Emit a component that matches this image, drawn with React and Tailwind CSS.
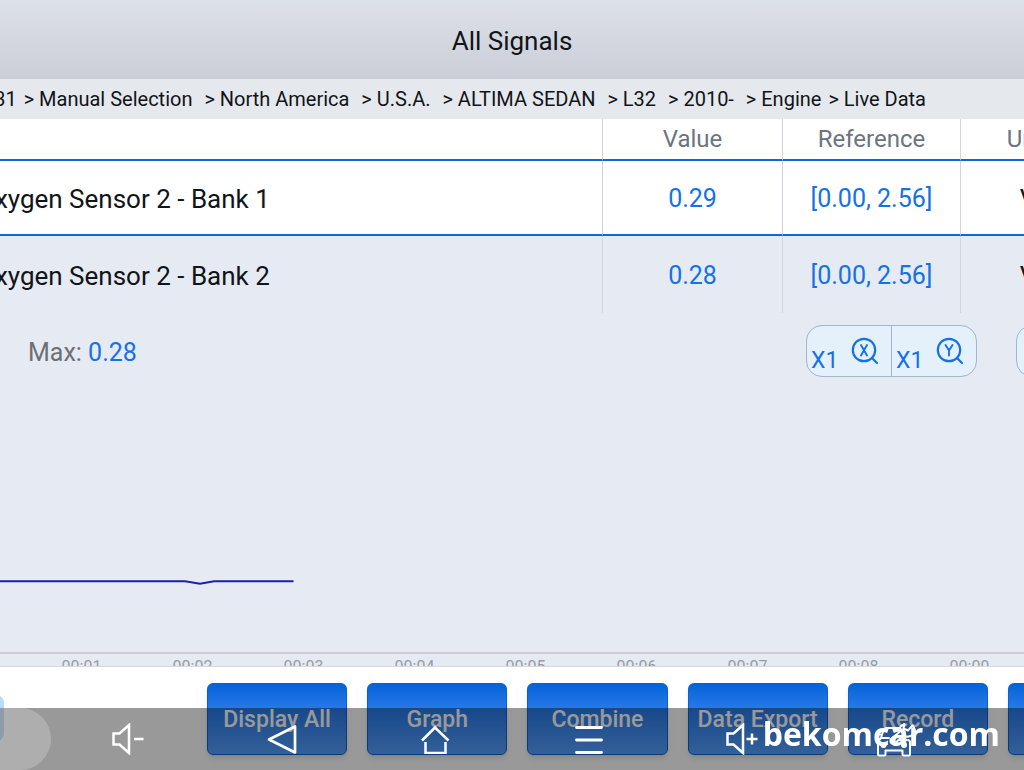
import React from 'react';
import clsx from 'clsx';

const crumbs = ['31', 'Manual Selection ', 'North America ', 'U.S.A. ', 'ALTIMA SEDAN ', 'L32 ', '2010- ', 'Engine', 'Live Data'];

const signals = [
  { name: 'Oxygen Sensor 2 - Bank 1', value: '0.29', reference: '[0.00, 2.56]', unit: 'V' },
  { name: 'Oxygen Sensor 2 - Bank 2', value: '0.28', reference: '[0.00, 2.56]', unit: 'V' },
];

const ticks = ['00:01', '00:02', '00:03', '00:04', '00:05', '00:06', '00:07', '00:08', '00:09'];

const actions = ['Display All', 'Graph', 'Combine', 'Data Export', 'Record', 'Pause'];

// Magnifier with the axis letter inside
function ZoomIcon({ axis }) {
  return (
    <svg className="w-7 h-7" viewBox="0 0 28 28" fill="none" stroke="currentColor" strokeWidth="2.2" strokeLinecap="round">
      <circle cx="13" cy="13" r="11.2" />
      <path d="M21 21l5 5" />
      {axis === 'X' ? <path strokeWidth="1.9" d="M10 8l6 10.500M16 8l-6 10.500" /> : <path strokeWidth="1.9" d="M9.500 8l3.500 5.500L16.500 8M13 13.500v5" />}
    </svg>
  );
}

function ZoomButton({ axis, className }) {
  return (
    <button type="button" aria-label={`Zoom ${axis}`} className={clsx('flex justify-between pl-1 pr-3 text-[#1471e6]', className)}>
      <span className="self-end text-[23px] leading-[30px]">X1</span>
      <span className="pt-[11px]">
        <ZoomIcon axis={axis} />
      </span>
    </button>
  );
}

function Speaker({ plus }) {
  return (
    <svg width="34" height="32" viewBox="0 0 34 32" fill="none" stroke="currentColor" strokeWidth="2.500">
      <path d="M2.500 10.500v11h6L18 30V2l-9.500 8.500z" />
      <path d={plus ? 'M21.500 16h11M27 10.500v11' : 'M23 16h9.500'} />
    </svg>
  );
}

function Back() {
  return (
    <svg width="30" height="30" viewBox="0 0 30 30" fill="none" stroke="currentColor" strokeWidth="2.700" strokeLinejoin="round">
      <path d="M2 15.500L28 2.500v26z" />
    </svg>
  );
}

function Home() {
  return (
    <svg width="30" height="30" viewBox="0 0 30 30" fill="none" stroke="currentColor" strokeWidth="2.500">
      <path d="M2 16.500L15 3.500l13.500 13M5.500 18v11h20V18" />
    </svg>
  );
}

function Menu() {
  return (
    <svg width="30" height="30" viewBox="0 0 30 30" fill="none" stroke="currentColor" strokeWidth="2.800" strokeLinecap="round">
      <path d="M2.500 3.500h25M2.500 16h25M2.500 28.500h25" />
    </svg>
  );
}

// Car with a wrench leaning over its roof
function CarService() {
  return (
    <svg width="44" height="36" viewBox="0 0 44 36" fill="none" stroke="currentColor" strokeWidth="2" strokeLinejoin="round" strokeLinecap="round">
      <path d="M25 7H12q-2 0-2.500 2L7 17l-3 3.500V33q0 1.500 1.500 1.500H10q1.500 0 1.500-1.500v-3.500h17V33q0 1.500 1.500 1.500h4.500Q36 34.500 36 33V20.500l-1.500-1.500" />
      <path d="M7 17h8M3.500 13.500H7M25 19h8" />
      <circle cx="9.500" cy="24" r="2" />
      <circle cx="30" cy="24" r="2" />
      <path d="M38.500 4.500L34 9.500l-4.500-2 1-4.500q-6 2-5 8l-9 7.500q-1 5 4.500 4l8-8q6 3 10.500-1.500 3-4-1-8.500z" />
    </svg>
  );
}

const navItems = [
  { label: 'Volume down', icon: <Speaker /> },
  { label: 'Back', icon: <Back /> },
  { label: 'Home', icon: <Home /> },
  { label: 'Menu', icon: <Menu /> },
  { label: 'Volume up', icon: <Speaker plus /> },
  { label: 'Diagnostics', icon: <CarService /> },
];

function SignalTable() {
  return (
    <div className="-ml-[23px] -mr-[71px]">
      <table className="w-full table-fixed border-separate border-spacing-0 leading-8">
        <thead>
          <tr className="h-[42px] bg-white text-[24px] text-[#6b7580]">
            <th className="border-b-2 border-[#1266dc]" aria-label="Name"></th>
            <th className="w-[180px] p-0 font-normal border-b-2 border-b-[#1266dc] border-l border-l-[#d3d6da]">Value</th>
            <th className="w-[178px] p-0 font-normal border-b-2 border-b-[#1266dc] border-l border-l-[#d3d6da]">Reference</th>
            <th className="w-[135px] p-0 font-normal border-b-2 border-b-[#1266dc] border-l border-l-[#d3d6da]">Unit</th>
          </tr>
        </thead>
        <tbody>
          {signals.map((s, i) => {
            const line = i === 0 ? 'border-b-2 border-b-[#1266dc]' : '';
            return (
              <tr key={s.name} className={i === 0 ? 'h-[75px] bg-white' : 'h-[77px]'}>
                <td className={clsx('p-0 pt-0.5 text-[26px]', line)}>{s.name}</td>
                <td className={clsx('p-0 pt-0.5 text-center text-[25px] text-[#1471e6] border-l border-l-[#d3d6da]', line)}>{s.value}</td>
                <td className={clsx('p-0 pt-0.5 text-center text-[25px] text-[#1471e6] border-l border-l-[#d3d6da]', line)}>{s.reference}</td>
                <td className={clsx('p-0 pt-0.5 text-center text-[26px] border-l border-l-[#d3d6da]', line)}>{s.unit}</td>
              </tr>
            );
          })}
        </tbody>
      </table>
    </div>
  );
}

function Graph() {
  return (
    <section className="flex-1 flex flex-col overflow-hidden">
      <div className="flex justify-between pl-7 pt-3 -mr-10">
        <p className="pt-3 text-[25px] leading-8 text-[#6b7075]">
          Max: <span className="text-[#1471e6]">0.28</span>
        </p>
        <div className="flex gap-[39px]">
          <div className="flex h-[52px] overflow-hidden rounded-2xl border border-[#9fb6cc] bg-[#e4f0fa]">
            <ZoomButton axis="X" className="w-[84px]" />
            <ZoomButton axis="Y" className="w-[85px] border-l border-[#9fb6cc]" />
          </div>
          <button type="button" aria-label="More" className="w-12 h-[52px] rounded-l-2xl border border-[#9fb6cc] bg-[#e4f0fa]"></button>
        </div>
      </div>
      <div className="flex-1 flex flex-col justify-end pb-16">
        <svg width="294" height="10" viewBox="0 0 294 10" fill="none" stroke="#1f1fae" strokeWidth="2">
          <path d="M0 3.300h185l15 2.500 14-2.500h79.500" />
        </svg>
      </div>
      <div className="h-[14px] shrink-0 overflow-hidden border-t-2 border-[#c9cdd1] flex pl-[26px]">
        {ticks.map(t => (
          <span key={t} className="w-[111px] shrink-0 text-center text-base leading-[26px] text-[#9a9da1]">{t}</span>
        ))}
      </div>
    </section>
  );
}

function ActionBar() {
  return (
    <footer className="h-[104px] shrink-0 flex items-start border-t border-[#d5d8dc] bg-white pt-4">
      <button type="button" aria-label="Previous" className="mt-3 -ml-4 w-5 h-[46px] shrink-0 rounded-lg bg-[#bcd8fa]"></button>
      <div className="flex flex-1 gap-5 ml-[203px] -mr-[124px]">
        {actions.map(a => (
          <button
            key={a}
            type="button"
            className="flex-1 min-w-0 h-[72px] pt-0.5 rounded-md border border-[#0a62d0] bg-linear-to-b from-[#0063da] to-[#56a0ff] text-[23px] leading-8 font-medium whitespace-nowrap text-white shadow-md"
          >
            {a}
          </button>
        ))}
      </div>
    </footer>
  );
}

// System bar that floats over the bottom of the app
function SystemBar() {
  return (
    <nav className="fixed inset-x-0 bottom-0 h-[62px] flex items-center bg-black/40 text-white">
      <div className="w-[5%] h-full rounded-r-full bg-white/20"></div>
      {navItems.map(item => (
        <button key={item.label} type="button" aria-label={item.label} className="w-[15%] flex justify-center">
          {item.icon}
        </button>
      ))}
      <span className="absolute right-6 bottom-4 font-['Open_Sans',sans-serif] text-[32px] leading-10 font-bold">bekomcar.com</span>
    </nav>
  );
}

export default function App() {
  return (
    <div className="min-h-screen flex flex-col overflow-hidden bg-[#e6eaf2] font-[Roboto,sans-serif] text-[#111418]">
      <header className="h-[79px] shrink-0 flex items-center justify-center bg-linear-to-b from-[#dde1ea] to-[#cbced7] pt-0.5">
        <h1 className="text-[26px] leading-8">All Signals</h1>
      </header>
      <nav aria-label="Breadcrumb" className="h-10 shrink-0 flex items-center justify-end overflow-hidden bg-[#e5e8ed] pr-[98px]">
        <ol className="flex shrink-0 gap-0.5 whitespace-pre text-[20px] leading-6">
          {crumbs.map((c, i) => (
            <li key={c}>{i > 0 ? ` > ${c}` : c}</li>
          ))}
        </ol>
      </nav>
      <SignalTable />
      <Graph />
      <ActionBar />
      <SystemBar />
    </div>
  );
}
